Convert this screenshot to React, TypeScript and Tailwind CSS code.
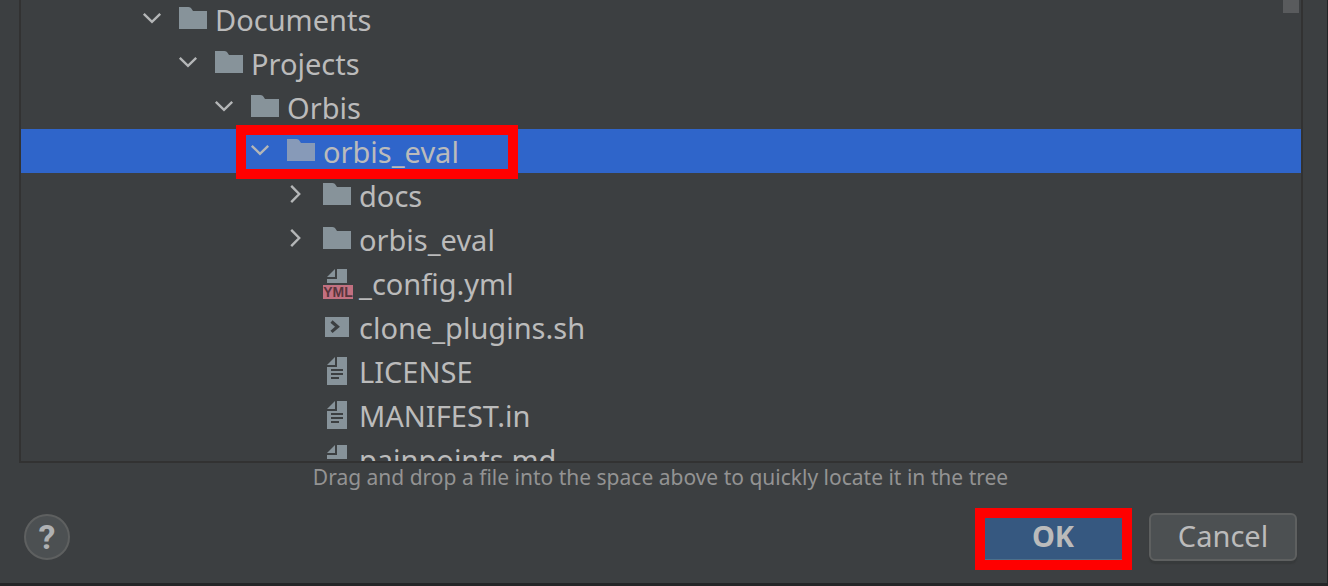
import React from "react";

type Kind = "folder" | "yml" | "shell" | "text" | "markdown";

interface TreeNode {
  name: string;
  kind: Kind;
  indent: string;
  open?: boolean;
  selected?: boolean;
}

const nodes: TreeNode[] = [
  { name: "Documents", kind: "folder", indent: "pl-[121px]", open: true },
  { name: "Projects", kind: "folder", indent: "pl-[157px]", open: true },
  { name: "Orbis", kind: "folder", indent: "pl-[193px]", open: true },
  { name: "orbis_eval", kind: "folder", indent: "pl-[229px]", open: true, selected: true },
  { name: "docs", kind: "folder", indent: "pl-[265px]", open: false },
  { name: "orbis_eval", kind: "folder", indent: "pl-[265px]", open: false },
  { name: "_config.yml", kind: "yml", indent: "pl-[265px]" },
  { name: "clone_plugins.sh", kind: "shell", indent: "pl-[265px]" },
  { name: "LICENSE", kind: "text", indent: "pl-[265px]" },
  { name: "MANIFEST.in", kind: "text", indent: "pl-[265px]" },
  { name: "painpoints.md", kind: "markdown", indent: "pl-[265px]" },
];

function Chevron({ open }: { open: boolean }) {
  return (
    <svg viewBox="0 0 20 20" className="size-5" fill="none" stroke="#b4b6b7" strokeWidth="2.4" aria-hidden="true">
      <path d={open ? "M1.8 4.8 10 12.8 18.2 4.8" : "M5.2 .8 13.2 9 5.2 17.2"} />
    </svg>
  );
}

function NodeIcon({ kind, selected }: { kind: Kind; selected?: boolean }) {
  return (
    <svg
      viewBox="0 0 32 32"
      className={selected ? "size-8 shrink-0 text-[#879ab8]" : "size-8 shrink-0 text-[#87939a]"}
      fill="currentColor"
      aria-hidden="true"
    >
      {kind === "folder" && <path d="M2 4h9.5c1.5 0 2.2.7 3 1.8L16 8h14v18H2z" />}
      {kind === "shell" && (
        <>
          <path d="M4 6h24v20H4z" />
          <path d="m10.5 10.5 6 5.2-6 5.2" fill="none" stroke="#3c3f41" strokeWidth="3.2" />
        </>
      )}
      {kind === "text" && (
        <>
          <path d="M14 2v8H6z" />
          <path d="M16 2h10v28H6V12h10z" />
          <path d="M10 14h12v2H10zM10 18h12v2H10zM10 22h8v2h-8z" fill="#3c3f41" />
        </>
      )}
      {(kind === "yml" || kind === "markdown") && (
        <>
          <path d="M14 2v8H6z" />
          <path d="M16 2h10v14H6v-4h10z" />
        </>
      )}
      {kind === "yml" && (
        <>
          <path d="M2 18h30v14H2z" fill="#c27080" />
          <text x="17" y="30" textAnchor="middle" fontSize="14" fontWeight="700" fontFamily="Liberation Sans, sans-serif" fill="#57353d">
            YML
          </text>
        </>
      )}
      {kind === "markdown" && <path d="M2 18h30v14H2z" fill="#5fa0b8" />}
    </svg>
  );
}

function TreeRow({ node }: { node: TreeNode }) {
  return (
    <li
      role="treeitem"
      aria-expanded={node.open}
      aria-selected={!!node.selected}
      className={`flex h-11 items-center ${node.indent} ${node.selected ? "bg-[#2f65ca]" : ""}`}
    >
      <div className="relative flex items-center">
        <div className="mr-[15px] size-5">
          {node.open !== undefined && (
            <button type="button" className="block" aria-label={`${node.open ? "Collapse" : "Expand"} ${node.name}`}>
              <Chevron open={node.open} />
            </button>
          )}
        </div>
        <NodeIcon kind={node.kind} selected={node.selected} />
        <span className="pt-0.5 pl-1.5 text-[29px] leading-[42px] whitespace-nowrap">{node.name}</span>
        {node.selected && (
          <span className="pointer-events-none absolute -top-1 -bottom-1.5 -left-3.5 z-10 w-[282px] border-10 border-[#ff0000]" />
        )}
      </div>
    </li>
  );
}

export default function App() {
  return (
    <main className="flex h-screen flex-col border-r border-b-3 border-r-[#222426] border-b-[#242527] bg-[#3c3f41] font-['Noto_Sans',sans-serif] text-[#bbbbbb]">
      <section className="relative mr-6 ml-[19px] min-h-0 flex-1 overflow-hidden border-x-2 border-b-2 border-[#323232]">
        <ul role="tree" aria-label="Files" className="-mt-[3px]">
          {nodes.map((node, i) => (
            <TreeRow key={i} node={node} />
          ))}
        </ul>
        <span className="absolute top-0 right-0.5 h-[13px] w-4 bg-[#595b5d]" />
      </section>
      <p className="pr-1.5 text-center text-[21px] leading-7 text-[#939393]">
        Drag and drop a file into the space above to quickly locate it in the tree
      </p>
      <footer className="flex items-center justify-between pt-[22px] pr-[30px] pb-[22px] pl-6">
        <button
          type="button"
          aria-label="Help"
          className="flex size-[46px] items-center justify-center rounded-full border-2 border-[#5e6060] bg-[#4c5052] font-['Roboto',sans-serif] text-[34px] leading-none font-bold text-[#afb1b3]"
        >
          ?
        </button>
        <div className="flex gap-[22px]">
          <button
            type="button"
            className="relative h-12 w-[148px] rounded-md border-2 border-[#4c708c] bg-[#365880] pb-0.5 text-[29px] leading-[42px] font-bold"
          >
            OK
            <span className="pointer-events-none absolute -top-[7px] -right-[7px] -bottom-[11px] -left-[6px] border-10 border-[#ff0000]" />
          </button>
          <button
            type="button"
            className="h-12 w-[148px] rounded-md border-2 border-[#5e6060] bg-[#4c5052] pb-0.5 text-[29px] leading-[42px] shadow-[0_3px_1px_#373a3b]"
          >
            Cancel
          </button>
        </div>
      </footer>
    </main>
  );
}
